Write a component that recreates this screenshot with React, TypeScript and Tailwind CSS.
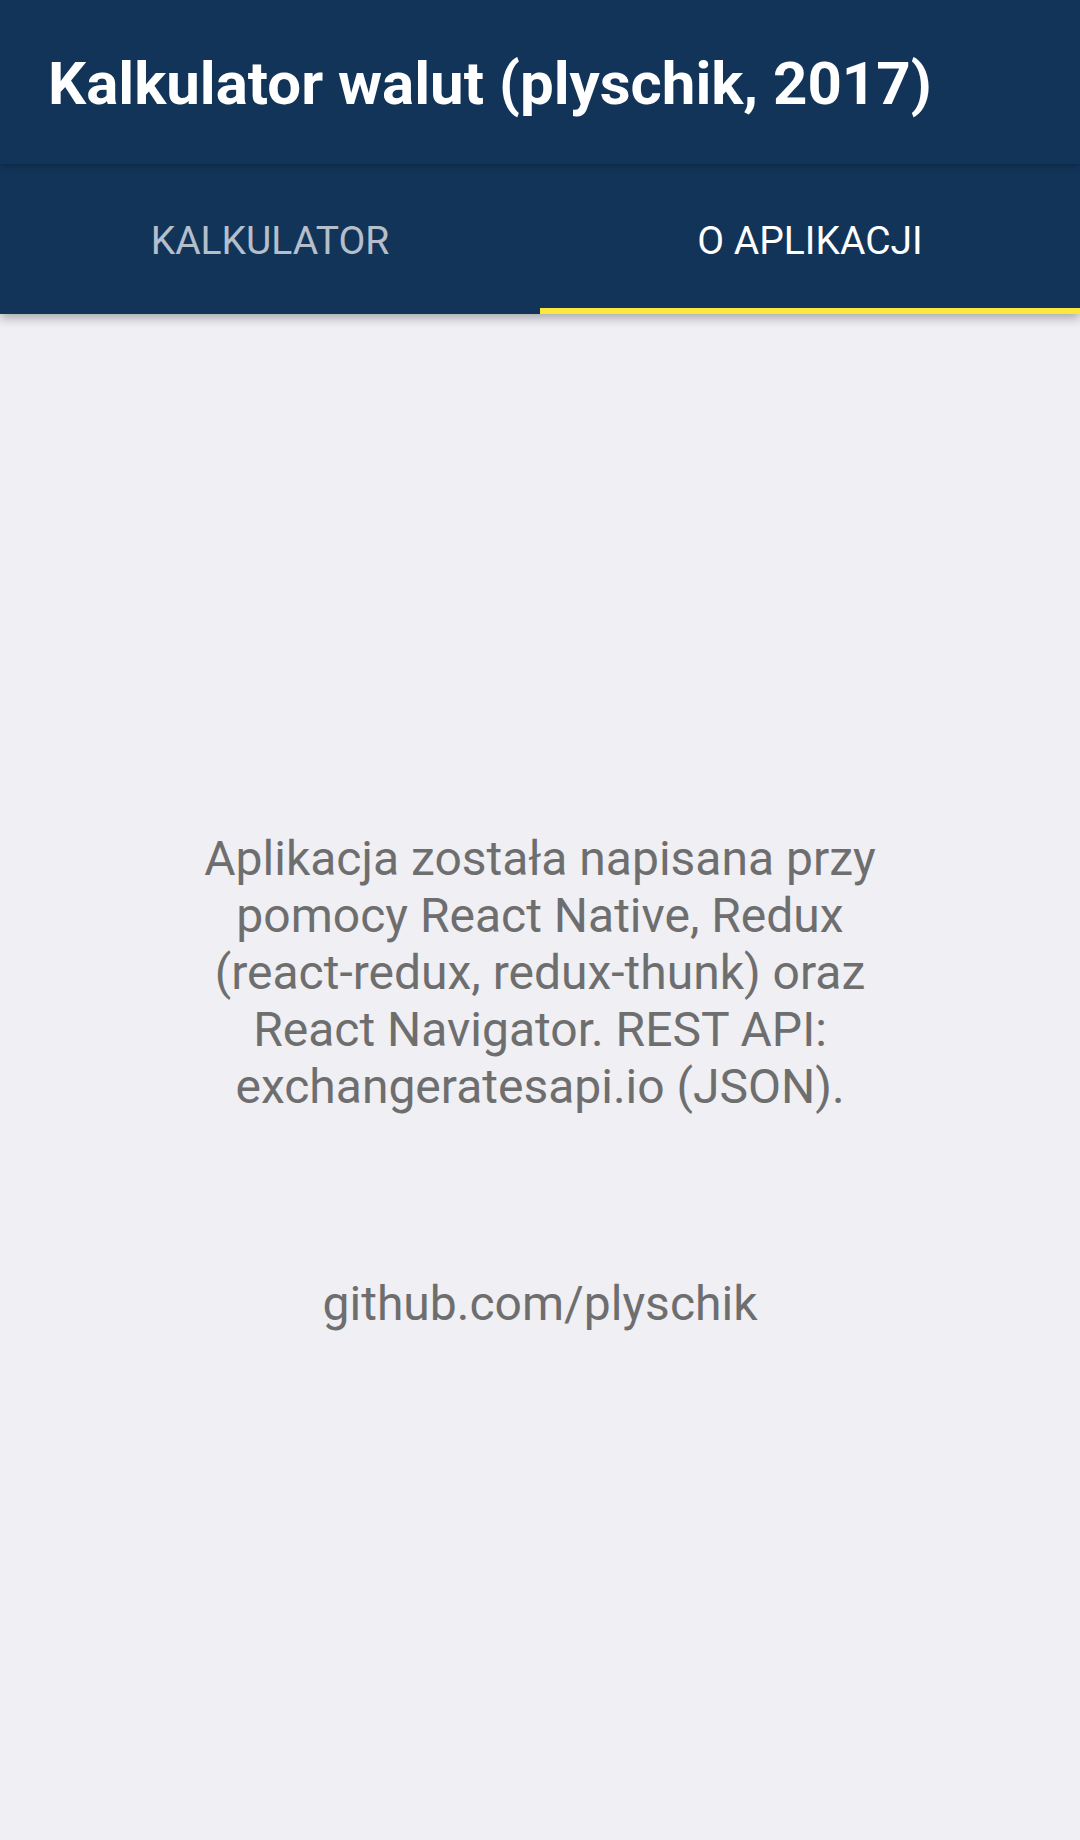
export default function App() {
  return (
    <div className="flex h-[1840px] w-[1080px] flex-col bg-[#efeff4] font-['Roboto',sans-serif]">
      <header className="relative z-20 flex h-[164px] items-center bg-[#133459] px-[48px] pt-[4px] shadow-[0_2px_6px_rgba(0,0,0,0.25)]">
        <h1 className="text-[60px] font-bold leading-none text-white">Kalkulator walut (plyschik, 2017)</h1>
      </header>

      <nav className="relative z-10 flex h-[150px] bg-[#133459] shadow-[0_4px_10px_rgba(0,0,0,0.3)]">
        <div className="flex flex-1 items-center justify-center pt-[4px]">
          <span className="text-[39px] font-normal uppercase text-white/70">Kalkulator</span>
        </div>
        <div className="relative flex flex-1 items-center justify-center pt-[4px]">
          <span className="text-[39px] font-normal uppercase text-white">O aplikacji</span>
          <div className="absolute bottom-0 left-0 right-0 h-[6px] bg-[#fce83c]" />
        </div>
      </nav>

      <main className="flex flex-1 flex-col items-center justify-center gap-[160px] pt-[8px]">
        <p className="w-[720px] text-center text-[48px] leading-[57px] text-[#6e6e6e]">
          Aplikacja została napisana przy pomocy React Native, Redux (react-redux, redux-thunk) oraz React Navigator. REST API: exchangeratesapi.io (JSON).
        </p>
        <p className="text-center text-[48px] leading-[57px] text-[#6e6e6e]">github.com/plyschik</p>
      </main>
    </div>
  );
}
